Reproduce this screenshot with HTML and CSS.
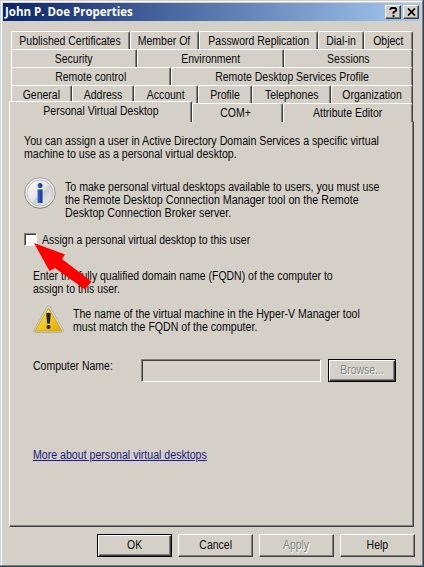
FILE: index.html
```html
<!DOCTYPE html>
<html lang="en">
<head>
<meta charset="utf-8">
<title>John P. Doe Properties</title>
<link rel="stylesheet" href="styles.css">
</head>
<body>
<div class="window">
  <header class="titlebar">
    <h1 class="title">John P. Doe Properties</h1>
    <button class="caption-btn" aria-label="Help"><svg width="9" height="10" viewBox="0 0 9 10"><path d="M1.500 3V1.800L2.600 1H6l1.200 1v1.600L4.500 5.200V7M4.500 8v2" fill="none" stroke="#000" stroke-width="1.8"/></svg></button>
    <button class="caption-btn" aria-label="Close"><svg width="9" height="8" viewBox="0 0 9 8"><path d="M1 .5l7 7M8 .5l-7 7" fill="none" stroke="#000" stroke-width="1.7"/></svg></button>
  </header>
  <main class="client">
    <nav class="tabs">
      <div class="tab-row row-a"><div class="tab"><span class="t">Published Certificates</span></div><div class="tab"><span class="t">Member Of</span></div><div class="tab"><span class="t">Password Replication</span></div><div class="tab"><span class="t">Dial-in</span></div><div class="tab"><span class="t">Object</span></div></div>
      <div class="tab-row row-b"><div class="tab"><span class="t">Security</span></div><div class="tab"><span class="t">Environment</span></div><div class="tab"><span class="t">Sessions</span></div></div>
      <div class="tab-row row-c"><div class="tab"><span class="t">Remote control</span></div><div class="tab"><span class="t">Remote Desktop Services Profile</span></div></div>
      <div class="tab-row row-d"><div class="tab"><span class="t">General</span></div><div class="tab"><span class="t">Address</span></div><div class="tab"><span class="t">Account</span></div><div class="tab"><span class="t">Profile</span></div><div class="tab"><span class="t">Telephones</span></div><div class="tab"><span class="t">Organization</span></div></div>
      <div class="tab-row row-e"><div class="tab active"><span class="t">Personal Virtual Desktop</span></div><div class="tab com"><span class="t">COM+</span></div><div class="tab"><span class="t">Attribute Editor</span></div></div>
    </nav>
    <section class="panel">
      <p class="intro"><span class="line wide">You can assign a user in Active Directory Domain Services a specific virtual</span><span class="line">machine to use as a personal virtual desktop.</span></p>
      <div class="note info">
        <svg width="33" height="33" viewBox="0 0 33 33">
          <defs>
            <linearGradient id="rim" x1="0" y1="0" x2="0" y2="1"><stop offset="0" stop-color="#9d9d9d"/><stop offset="1" stop-color="#777"/></linearGradient>
            <linearGradient id="disc" x1="0" y1="0" x2="1" y2="1"><stop offset="0" stop-color="#fff"/><stop offset=".5" stop-color="#e4e4e4"/><stop offset=".55" stop-color="#cfcfcf"/><stop offset="1" stop-color="#eee"/></linearGradient>
            <linearGradient id="ink" x1="0" y1="0" x2="1" y2="0"><stop offset="0" stop-color="#3f6ccc"/><stop offset="1" stop-color="#0c2f94"/></linearGradient>
          </defs>
          <circle cx="16" cy="16" r="15.3" fill="#f4f4f4" stroke="url(#rim)"/>
          <circle cx="16" cy="16" r="13" fill="url(#disc)" stroke="#aaa" stroke-width=".8"/>
          <circle cx="16" cy="8.500" r="2.500" fill="url(#ink)"/>
          <rect x="13.500" y="12.500" width="5" height="13.500" fill="url(#ink)"/>
        </svg>
        <p><span class="line">To make personal virtual desktops available to users, you must use</span><span class="line wider">the Remote Desktop Connection Manager tool on the Remote</span><span class="line wider">Desktop Connection Broker server.</span></p>
      </div>
      <label class="check"><span class="box"></span><span class="line narrow">Assign a personal virtual desktop to this user</span></label>
      <p class="fqdn"><span class="line narrow">Enter the fully qualified domain name (FQDN) of the computer to</span><span class="line narrow">assign to this user.</span></p>
      <div class="note warn">
        <svg width="32" height="29" viewBox="0 0 32 29">
          <defs><linearGradient id="gold" x1="0" y1="0" x2="1" y2="1"><stop offset="0" stop-color="#fff09a"/><stop offset=".4" stop-color="#f6d224"/><stop offset="1" stop-color="#e5a400"/></linearGradient></defs>
          <path d="M13.800 2Q15.500 0 17.200 2L30.500 25Q31 27.500 28.500 27.500H2.500Q0 27.500 1 25Z" fill="#dcdcdc" stroke="#a4a4a4" stroke-width=".8"/>
          <path d="M15.500 3L29 26H2Z" fill="url(#gold)" stroke="#c79a14" stroke-width=".8"/>
          <path d="M13.200 8.500Q15.500 7 17.800 8.500L16.900 18.500H14.100Z" fill="#222"/><circle cx="15.500" cy="22" r="2" fill="#222"/>
        </svg>
        <p><span class="line">The name of the virtual machine in the Hyper-V Manager tool</span><span class="line">must match the FQDN of the computer.</span></p>
      </div>
      <div class="field"><div class="field-label"><span class="line narrow">Computer Name:</span></div><span class="input"></span><button class="btn default disabled browse"><span class="t">Browse...</span></button></div>
      <a class="more line">More about personal virtual desktops</a>
    </section>
    <footer class="actions"><button class="btn default"><span class="t">OK</span></button><button class="btn"><span class="t">Cancel</span></button><button class="btn disabled"><span class="t">Apply</span></button><button class="btn"><span class="t">Help</span></button></footer>
  </main>
  <svg class="arrow" width="60" height="52" viewBox="0 0 60 52"><path d="M1 1L32 12.500L29 17L58.500 39.500L52 47.500L22 26L16.500 29Z" fill="#f00"/></svg>
</div>
</body>
</html>
```
FILE: styles.css
```css
* { box-sizing: border-box; }
body { margin: 0; font: 12px/13px "Liberation Sans", Arial, sans-serif; color: #080808; background: #24415f; overflow: hidden; }
p, h1 { margin: 0; }
.window { position: relative; width: 423px; height: 566px; background: #d4d0c8; border: 1px solid; border-color: #d4d0c8 #808080 #808080 #c5d4e8; box-shadow: inset 1px 1px #fff; padding: 2px; }
.titlebar { display: flex; align-items: center; height: 18px; background: linear-gradient(90deg, #0a246a, #a6caf0); padding: 0 1px 0 2px; }
.title { flex: 1; font: bold 11.5px/18px "Open Sans", sans-serif; color: #fff; }
.caption-btn { width: 16px; height: 14px; padding: 0; margin-left: 2px; display: grid; place-items: center; background: #d4d0c8; border: 1px solid; border-color: #fff #404040 #404040 #fff; box-shadow: inset -1px -1px #808080; }
.client { padding: 10px 0 0 6px; }

/* Condensed UI lettering */
.line { display: block; width: max-content; transform: scaleX(.883); transform-origin: 0 50%; }
.wide { transform: scaleX(.888); }
.wider { transform: scaleX(.893); }
.narrow { transform: scaleX(.874); }
.t { display: inline-block; transform: scaleX(.873); margin: 0 -8px; }

.tabs { width: 405px; }
.tab-row { display: grid; height: 18px; margin: 0 1px 0 2px; }
.row-a { grid-template-columns: 119px 69px 119px 46px 49px; }
.row-b { grid-template-columns: 126px 147px 129px; }
.row-c { grid-template-columns: 160px 242px; }
.row-d { grid-template-columns: 61px 62px 64px 54px 79px 82px; }
.row-e { grid-template-columns: 183px 91px 130px; margin: 0 1px 0 0; }
.tab { border-top: 1px solid #fff; border-left: 1px solid #fff; border-right: 1px solid #404040; border-radius: 2px 2px 0 0; box-shadow: inset -1px 0 #808080; text-align: center; line-height: 18px; white-space: nowrap; background: #d4d0c8; }
.com { padding-right: 4px; }
.active { margin-top: -2px; height: 21px; position: relative; }
.panel { width: 405px; height: 406px; border: 1px solid; border-color: #fff #404040 #404040 #fff; box-shadow: inset -1px -1px #808080; padding: 13px 0 0 14px; white-space: nowrap; }
.note { display: flex; }
.note svg { flex: none; }
.info { margin-top: 16px; gap: 8px; }
.info p { padding-top: 4px; }
.check { display: flex; gap: 5px; height: 13px; margin-top: 13px; align-items: flex-start; }
.check .line { margin-top: 1px; }
.box { width: 13px; height: 13px; background: #fff; border: 1px solid; border-color: #808080 #fff #fff #808080; box-shadow: inset 1px 1px #404040; }
.fqdn { margin: 24px 0 0 9px; }
.warn { margin: 9px 0 0 9px; gap: 8px; }
.warn p { padding-top: 3px; }
.field { display: flex; margin: 25px 0 0 9px; }
.field-label { width: 108px; line-height: 14px; }
.input { width: 180px; height: 23px; border: 1px solid; border-color: #808080 #fff #fff #808080; box-shadow: inset 1px 1px #404040; margin-right: 7px; }
.btn { font: inherit; color: #080808; width: 75px; height: 23px; padding: 0; background: #d4d0c8; border: 1px solid; border-color: #fff #404040 #404040 #fff; box-shadow: inset -1px -1px #808080; }
.default { border-color: #000; box-shadow: inset 1px 1px #fff, inset -1px -1px #404040, inset -2px -2px #808080; }
.disabled { color: #808080; text-shadow: 1px 1px #fff; }
.browse { width: 68px; }
.more { margin: 67px 0 0 9px; color: #1a1a80; text-decoration: underline; }
.actions { display: flex; gap: 6px; margin: 7px 0 0 88px; }
.arrow { position: absolute; left: 32px; top: 241px; }
```
